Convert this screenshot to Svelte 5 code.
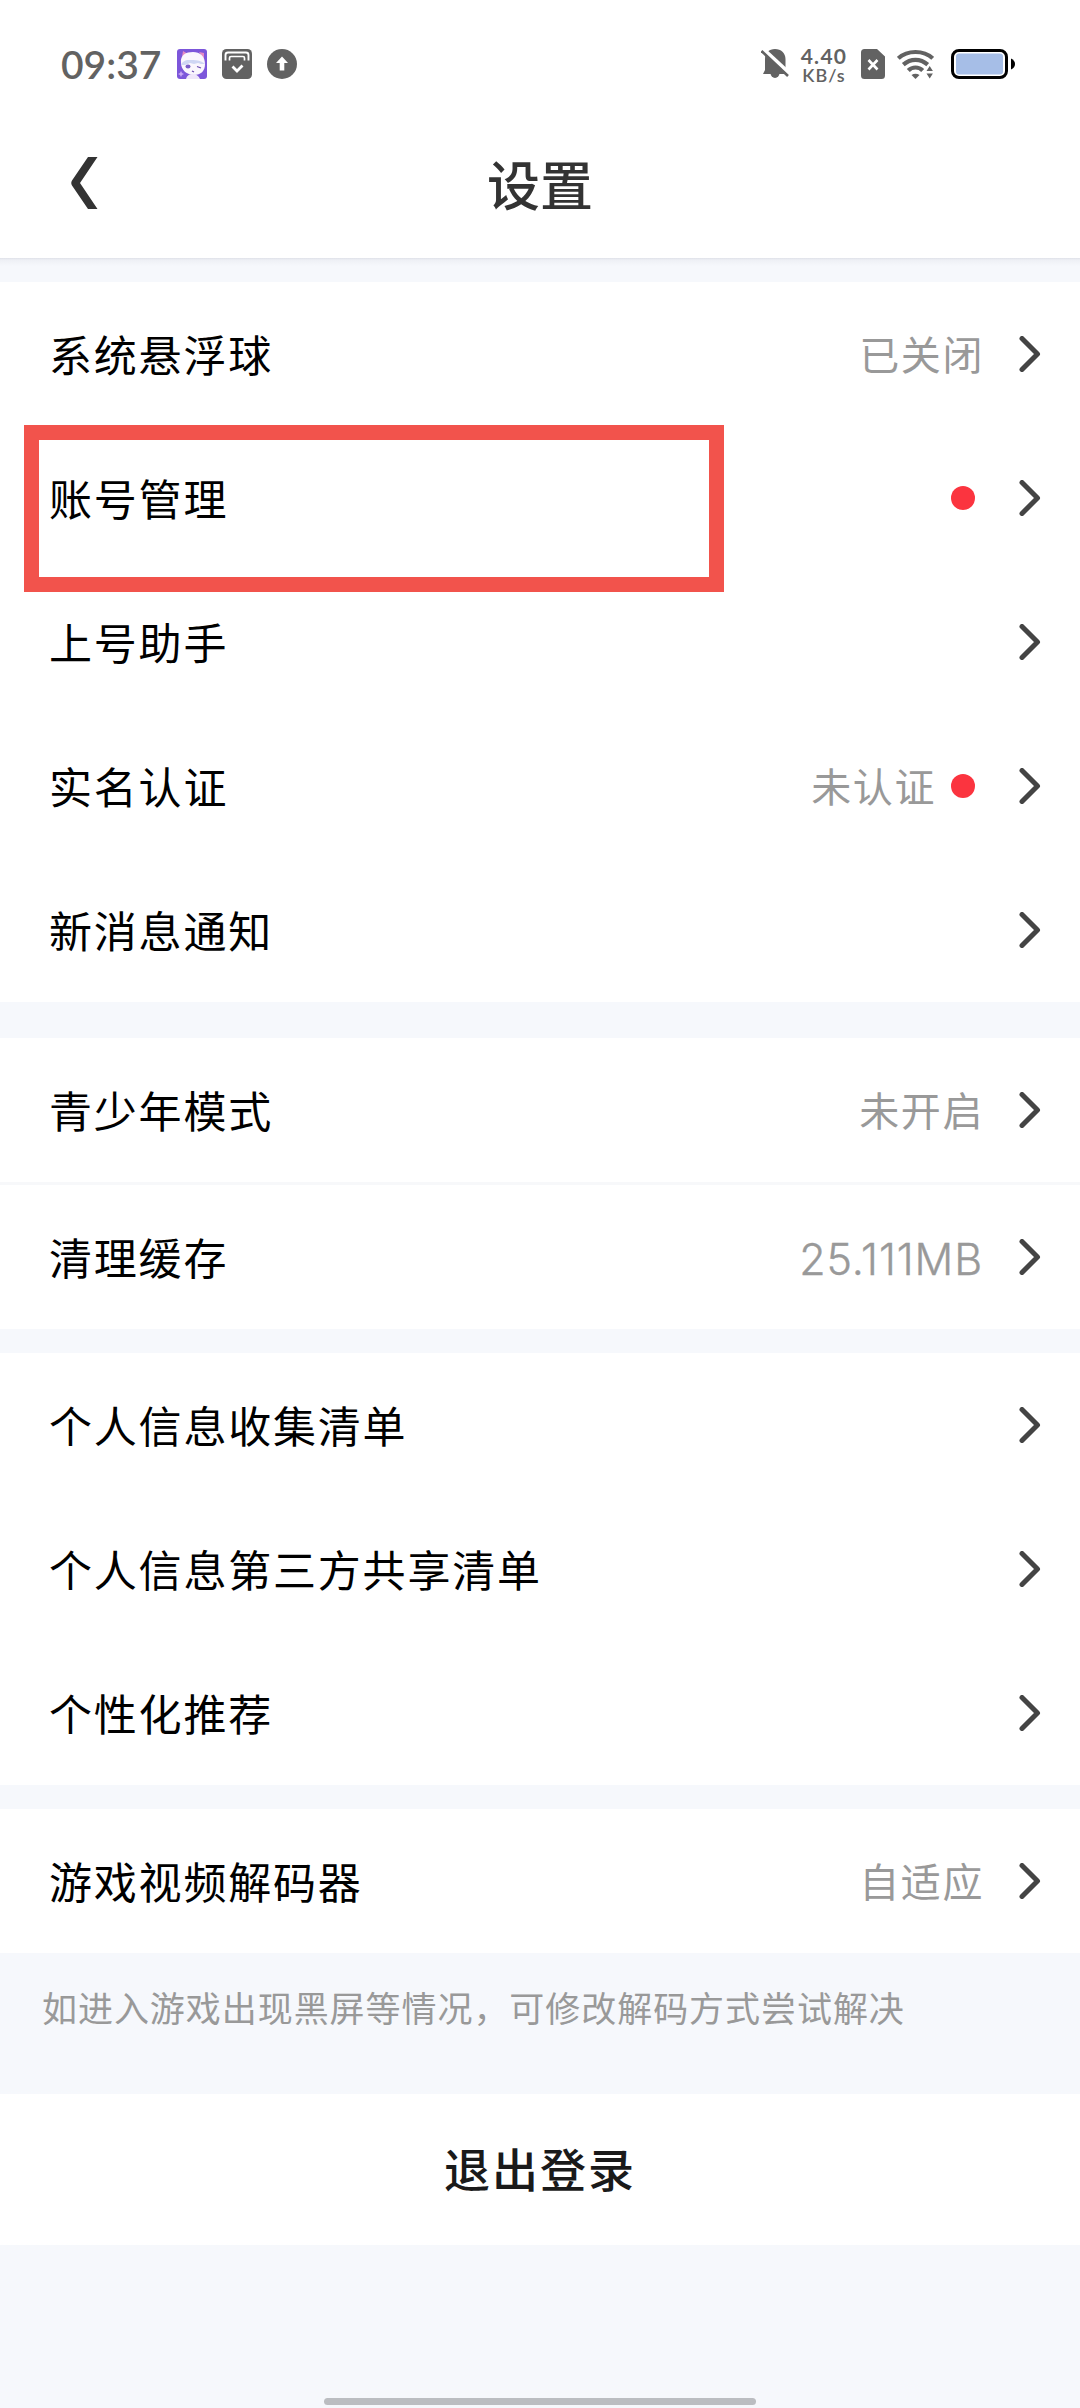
<script lang="ts">
	type Item = {
		label: string;
		value?: string;
		dot?: boolean;
		marked?: boolean;
	};

	type Group = {
		id: string;
		items: Item[];
	};

	const groups: Group[] = [
		{
			id: 'account',
			items: [
				{ label: '系统悬浮球', value: '已关闭' },
				{ label: '账号管理', dot: true, marked: true },
				{ label: '上号助手' },
				{ label: '实名认证', value: '未认证', dot: true },
				{ label: '新消息通知' }
			]
		},
		{
			id: 'general',
			items: [
				{ label: '青少年模式', value: '未开启' },
				{ label: '清理缓存', value: '25.111MB' }
			]
		},
		{
			id: 'privacy',
			items: [
				{ label: '个人信息收集清单' },
				{ label: '个人信息第三方共享清单' },
				{ label: '个性化推荐' }
			]
		},
		{
			id: 'decoder',
			items: [{ label: '游戏视频解码器', value: '自适应' }]
		}
	];

	// Latin-only values use a larger, tighter face
	const isLatin = (text: string) => /^[\d.A-Z]+$/.test(text);
</script>

<div class="screen">
	<div class="status-bar">
		<span class="time">09:37</span>
		<svg class="avatar" width="30" height="30" viewBox="0 0 30 30">
			<rect width="30" height="30" rx="3" fill="#7c56da" />
			<path d="M5 8 6 2l5 3M22 3l5 1 0 6" fill="#e58bc4" />
			<path d="M4 14C3 6 9 3 16 3s12 4 12 12c0 7-4 11-11 11S4 21 4 14z" fill="#faf6fd" />
			<path d="M4 16c1-3 4-5 8-5 6 0 12 0 16 4l-4 0-3-1-4 1-4-1-5 2z" fill="#cfd6f4" />
			<path d="M9 30c1-4 4-5 7-5s6 2 7 5z" fill="#efe6fa" />
			<ellipse cx="11" cy="17.500" rx="2.500" ry="2" fill="#7a5cc8" />
			<path d="M20 17.500l4 1.500M15 22l2 1" stroke="#6a4bb0" stroke-width="1.300" fill="none" />
			<path d="M4 22l1 2 2 1-2 1-1 2-1-2-2-1 2-1z" fill="#c8a6f5" />
		</svg>
		<svg class="inbox" width="30" height="30" viewBox="0 0 30 30">
			<rect width="30" height="30" rx="4.500" fill="#626262" />
			<path d="M3.500 11.500V6a2.500 2.500 0 0 1 2.500-2.500h18A2.500 2.500 0 0 1 26.500 6v5.500" stroke="#fff" stroke-width="1.900" fill="none" />
			<path d="M7.500 11.500V9a1.500 1.500 0 0 1 1.500-1.500h12A1.500 1.500 0 0 1 22.500 9v2.500" stroke="#fff" stroke-width="1.700" fill="none" />
			<path d="M10.500 17.500l4.500 4.500 5.500-5.500" stroke="#fff" stroke-width="2.800" fill="none" />
		</svg>
		<svg class="upload" width="30" height="30" viewBox="0 0 30 30">
			<circle cx="15" cy="15" r="15" fill="#626262" />
			<path d="M15 7.500l6 6.500h-3.700v7.500h-4.600V14H9z" fill="#fff" />
		</svg>

		<div class="status-right">
			<svg class="bell" width="28" height="32" viewBox="0 0 28 32">
				<path d="M14 1c6 0 10.500 4 10.500 10v12l1.500 3H2l2-4V11C4 5 8 1 14 1z" fill="#626262" />
				<path d="M9.500 25h9a4.500 5 0 0 1-9 0z" fill="#626262" />
				<path d="M1 0l27 25" stroke="#fff" stroke-width="4" />
				<path d="M0.500 3l26.500 25" stroke="#626262" stroke-width="2.600" />
			</svg>
			<div class="speed">
				<span class="rate">4.40</span>
				<span class="unit">KB/s</span>
			</div>
			<svg class="sim" width="24" height="30" viewBox="0 0 24 30">
				<path d="M3.500 0H16l8 7.500v19a3.500 3.500 0 0 1-3.500 3.500h-17A3.500 3.500 0 0 1 0 26.500v-23A3.500 3.500 0 0 1 3.500 0z" fill="#626262" />
				<path d="M7.500 11l9 9.500M16.500 11l-9 9.500" stroke="#fff" stroke-width="2.600" />
			</svg>
			<svg class="wifi" width="37" height="30" viewBox="0 0 37 30">
				<g fill="none" stroke="#626262" stroke-width="4.200">
					<path d="M1.300 9.300C6 5 12 3 18.500 3S31 5 35.700 9.300" />
					<path d="M6.300 15.700C10 12.500 14 10.900 18.500 10.900S27 12.500 30.700 15.700" />
					<path d="M11.300 21.500c2-2 4.400-3 7.200-3s5.200 1 7.200 3" />
				</g>
				<path d="M14.500 26q4-2.500 8 0l-4 4z" fill="#626262" />
				<path d="M29.500 22l3.200-5 3.200 5zM29.500 24.500l3.200 5 3.200-5z" fill="#626262" />
			</svg>
			<svg class="battery" width="65" height="30" viewBox="0 0 65 30">
				<rect x="1.500" y="1.500" width="54" height="27" rx="6.500" fill="#fff" stroke="#000" stroke-width="3" />
				<rect x="5" y="4.500" width="47" height="21" rx="3" fill="#a6bee7" />
				<path d="M60 9.500q4 2 4 5.500t-4 5.500z" fill="#000" />
			</svg>
		</div>
	</div>

	<header>
		<svg class="back" width="27" height="52" viewBox="0 0 27 52">
			<path d="M17 0h9.500L9 26l17.500 26H17L1 28.500Q-0.500 26 1 23.500z" fill="#333" />
		</svg>
		<h1>设置</h1>
	</header>

	<main>
		{#each groups as group (group.id)}
			<section class={group.id}>
				{#each group.items as item (item.label)}
					<div class="row">
						<span class="label">{item.label}</span>
						{#if item.value}
							<span class="value" class:tight={item.dot} class:latin={isLatin(item.value)}>{item.value}</span>
						{/if}
						{#if item.dot}
							<i class="dot"></i>
						{/if}
						<svg class="chevron" width="22" height="36" viewBox="0 0 22 36">
							<path d="M3 2.500L18.500 18 3 33.500" fill="none" stroke="#444" stroke-width="5" stroke-linecap="round" stroke-linejoin="round" />
						</svg>
						{#if item.marked}
							<div class="mark"></div>
						{/if}
					</div>
				{/each}
			</section>
		{/each}
		<p class="hint">如进入游戏出现黑屏等情况，可修改解码方式尝试解决</p>
		<button class="logout">退出登录</button>
	</main>

	<div class="home-bar"></div>
</div>

<style>
	:global(body) {
		background: #f6f8fc;
	}

	.screen {
		display: flex;
		flex-direction: column;
		width: 1080px;
		height: 2408px;
		overflow: hidden;
		background: #f6f8fc;
		color: #000;
		font-family: 'Noto Sans CJK SC', sans-serif;
	}

	svg {
		display: block;
		flex: none;
	}

	.status-bar {
		display: flex;
		align-items: center;
		box-sizing: border-box;
		height: 116px;
		padding: 12px 64px 0 61px;
		background: #fff;
		color: #626262;
	}

	.time {
		width: 116px;
		padding-bottom: 1px;
		font: 600 39px/48px Lato, sans-serif;
		letter-spacing: 0;
		white-space: nowrap;
	}

	.inbox,
	.upload {
		margin-left: 15px;
	}

	.status-right {
		display: flex;
		align-items: center;
		margin-left: auto;
	}

	.speed {
		display: flex;
		flex-direction: column;
		align-items: center;
		width: 50px;
		margin: 0 12px 0 10px;
	}

	.rate {
		font: 700 21px/21px Lato, sans-serif;
		letter-spacing: 1.3px;
	}

	.unit {
		font: 600 18px/18px Lato, sans-serif;
		letter-spacing: 1px;
	}

	.wifi {
		margin-left: 12px;
	}

	.battery {
		margin-left: 17px;
	}

	header {
		display: grid;
		grid-template-columns: 72px 1fr 72px;
		align-items: center;
		box-sizing: border-box;
		height: 142px;
		border-bottom: 1px solid #fff;
		background: #fff;
	}

	.back {
		grid-column: 1;
		margin: -7px 0 0 71px;
	}

	h1 {
		grid-column: 2;
		margin: -8px 0 0;
		color: #333;
		font-size: 53px;
		font-weight: 500;
		line-height: 72px;
		text-align: center;
	}

	main {
		display: flex;
		flex-direction: column;
		padding-top: 24px;
		background: linear-gradient(#dfe1e8 0, #eef0f5 2px, #f6f8fc 8px);
	}

	section {
		margin-bottom: 24px;
		background: #fff;
	}

	.account {
		margin-bottom: 36px;
	}

	.decoder {
		margin-bottom: 0;
	}

	.general .row + .row {
		border-top: 3px solid #f7f8fa;
	}

	.row {
		position: relative;
		display: flex;
		align-items: center;
		height: 144px;
		padding: 0 39px 0 49px;
	}

	.label {
		flex: 1;
		padding-bottom: 2px;
		font-size: 43px;
		line-height: 60px;
		letter-spacing: 1.8px;
	}

	.value {
		margin-right: 35px;
		padding-bottom: 2px;
		color: #999;
		font-size: 40px;
		line-height: 56px;
		letter-spacing: 1.6px;
	}

	.value.tight {
		margin-right: 15px;
	}

	.value.latin {
		margin-right: 36px;
		padding: 4px 0 0;
		font-family: Inter, sans-serif;
		font-size: 43px;
		font-weight: 300;
		letter-spacing: 0.9px;
		-webkit-text-stroke: 0.4px #999;
	}

	.dot {
		width: 24px;
		height: 24px;
		margin-right: 44px;
		border-radius: 50%;
		background: #fb343f;
	}

	.mark {
		position: absolute;
		top: -1px;
		left: 24px;
		box-sizing: border-box;
		width: 700px;
		height: 167px;
		border: 15px solid #f2534c;
		z-index: 1;
	}

	.hint {
		box-sizing: border-box;
		height: 141px;
		margin: 0;
		padding: 29px 42px 0;
		color: #999;
		font-size: 35px;
		line-height: 50px;
		letter-spacing: 0.95px;
		white-space: nowrap;
	}

	.logout {
		height: 151px;
		padding: 0 0 5px;
		border: none;
		background: #fff;
		color: #1a1a1a;
		font-family: inherit;
		font-size: 46px;
		font-weight: 500;
		letter-spacing: 2px;
	}

	.home-bar {
		width: 432px;
		height: 7px;
		margin: auto auto 3px;
		border-radius: 4px;
		background: #bbbdc1;
	}
</style>
